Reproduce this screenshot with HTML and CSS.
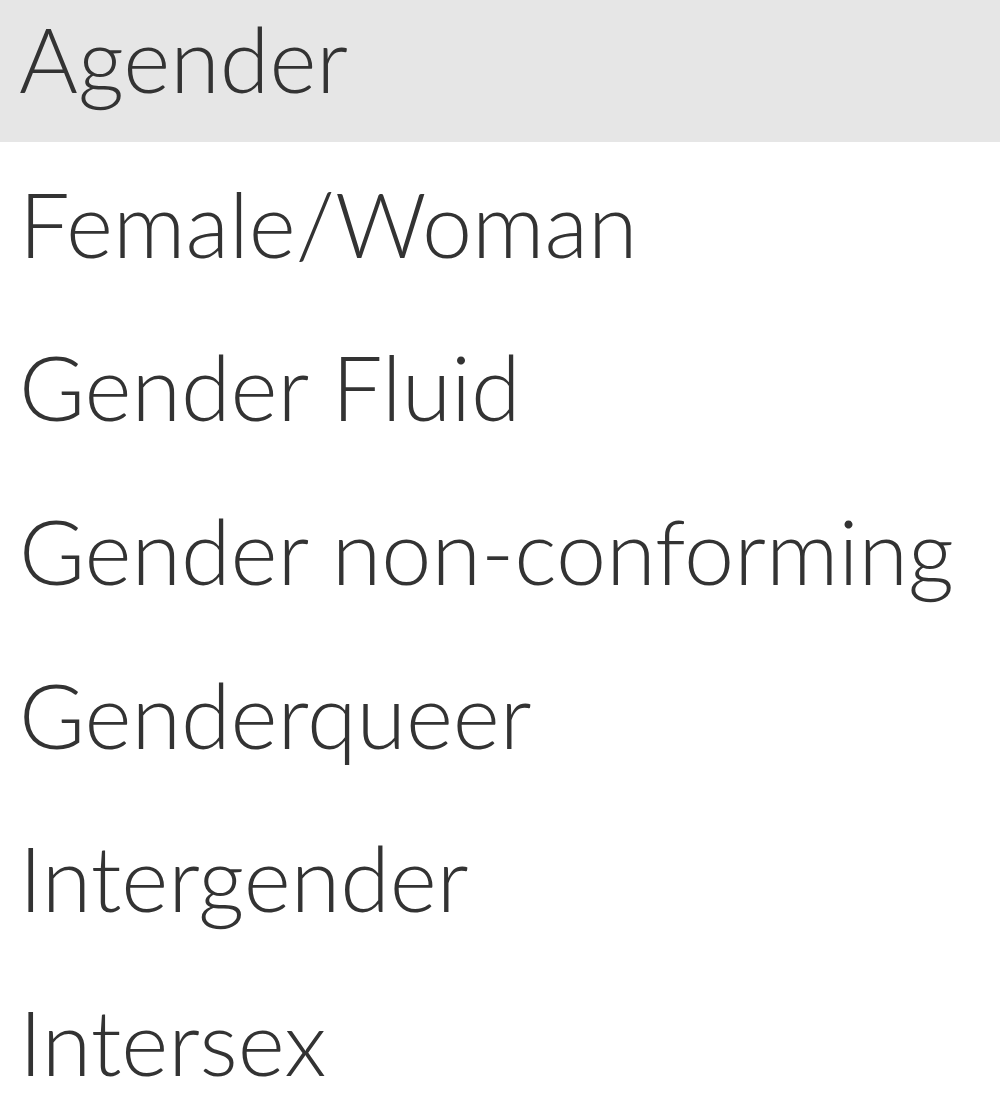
FILE: index.html
```html
<!DOCTYPE html>
<html>
<head>
<meta charset="utf-8">
<link rel="stylesheet" href="styles.css">
</head>
<body>
<ul class="list">
  <li class="item selected">Agender</li>
  <li class="item">Female/Woman</li>
  <li class="item">Gender Fluid</li>
  <li class="item">Gender non-conforming</li>
  <li class="item">Genderqueer</li>
  <li class="item">Intergender</li>
  <li class="item">Intersex</li>
</ul>
</body>
</html>
```
FILE: styles.css
```css
html, body {
  margin: 0;
  padding: 0;
  background: #ffffff;
  overflow: hidden;
}
.list {
  list-style: none;
  margin: -24px 0 0 0;
  padding: 0;
}
.item {
  height: 163.67px;
  line-height: 163.67px;
  padding-left: 19px;
  font-family: "Lato", sans-serif;
  font-weight: 300;
  font-size: 90px;
  color: #333333;
  white-space: nowrap;
}
.selected {
  height: 165.67px;
  line-height: 165.67px;
  background: #e6e6e6;
}
```
